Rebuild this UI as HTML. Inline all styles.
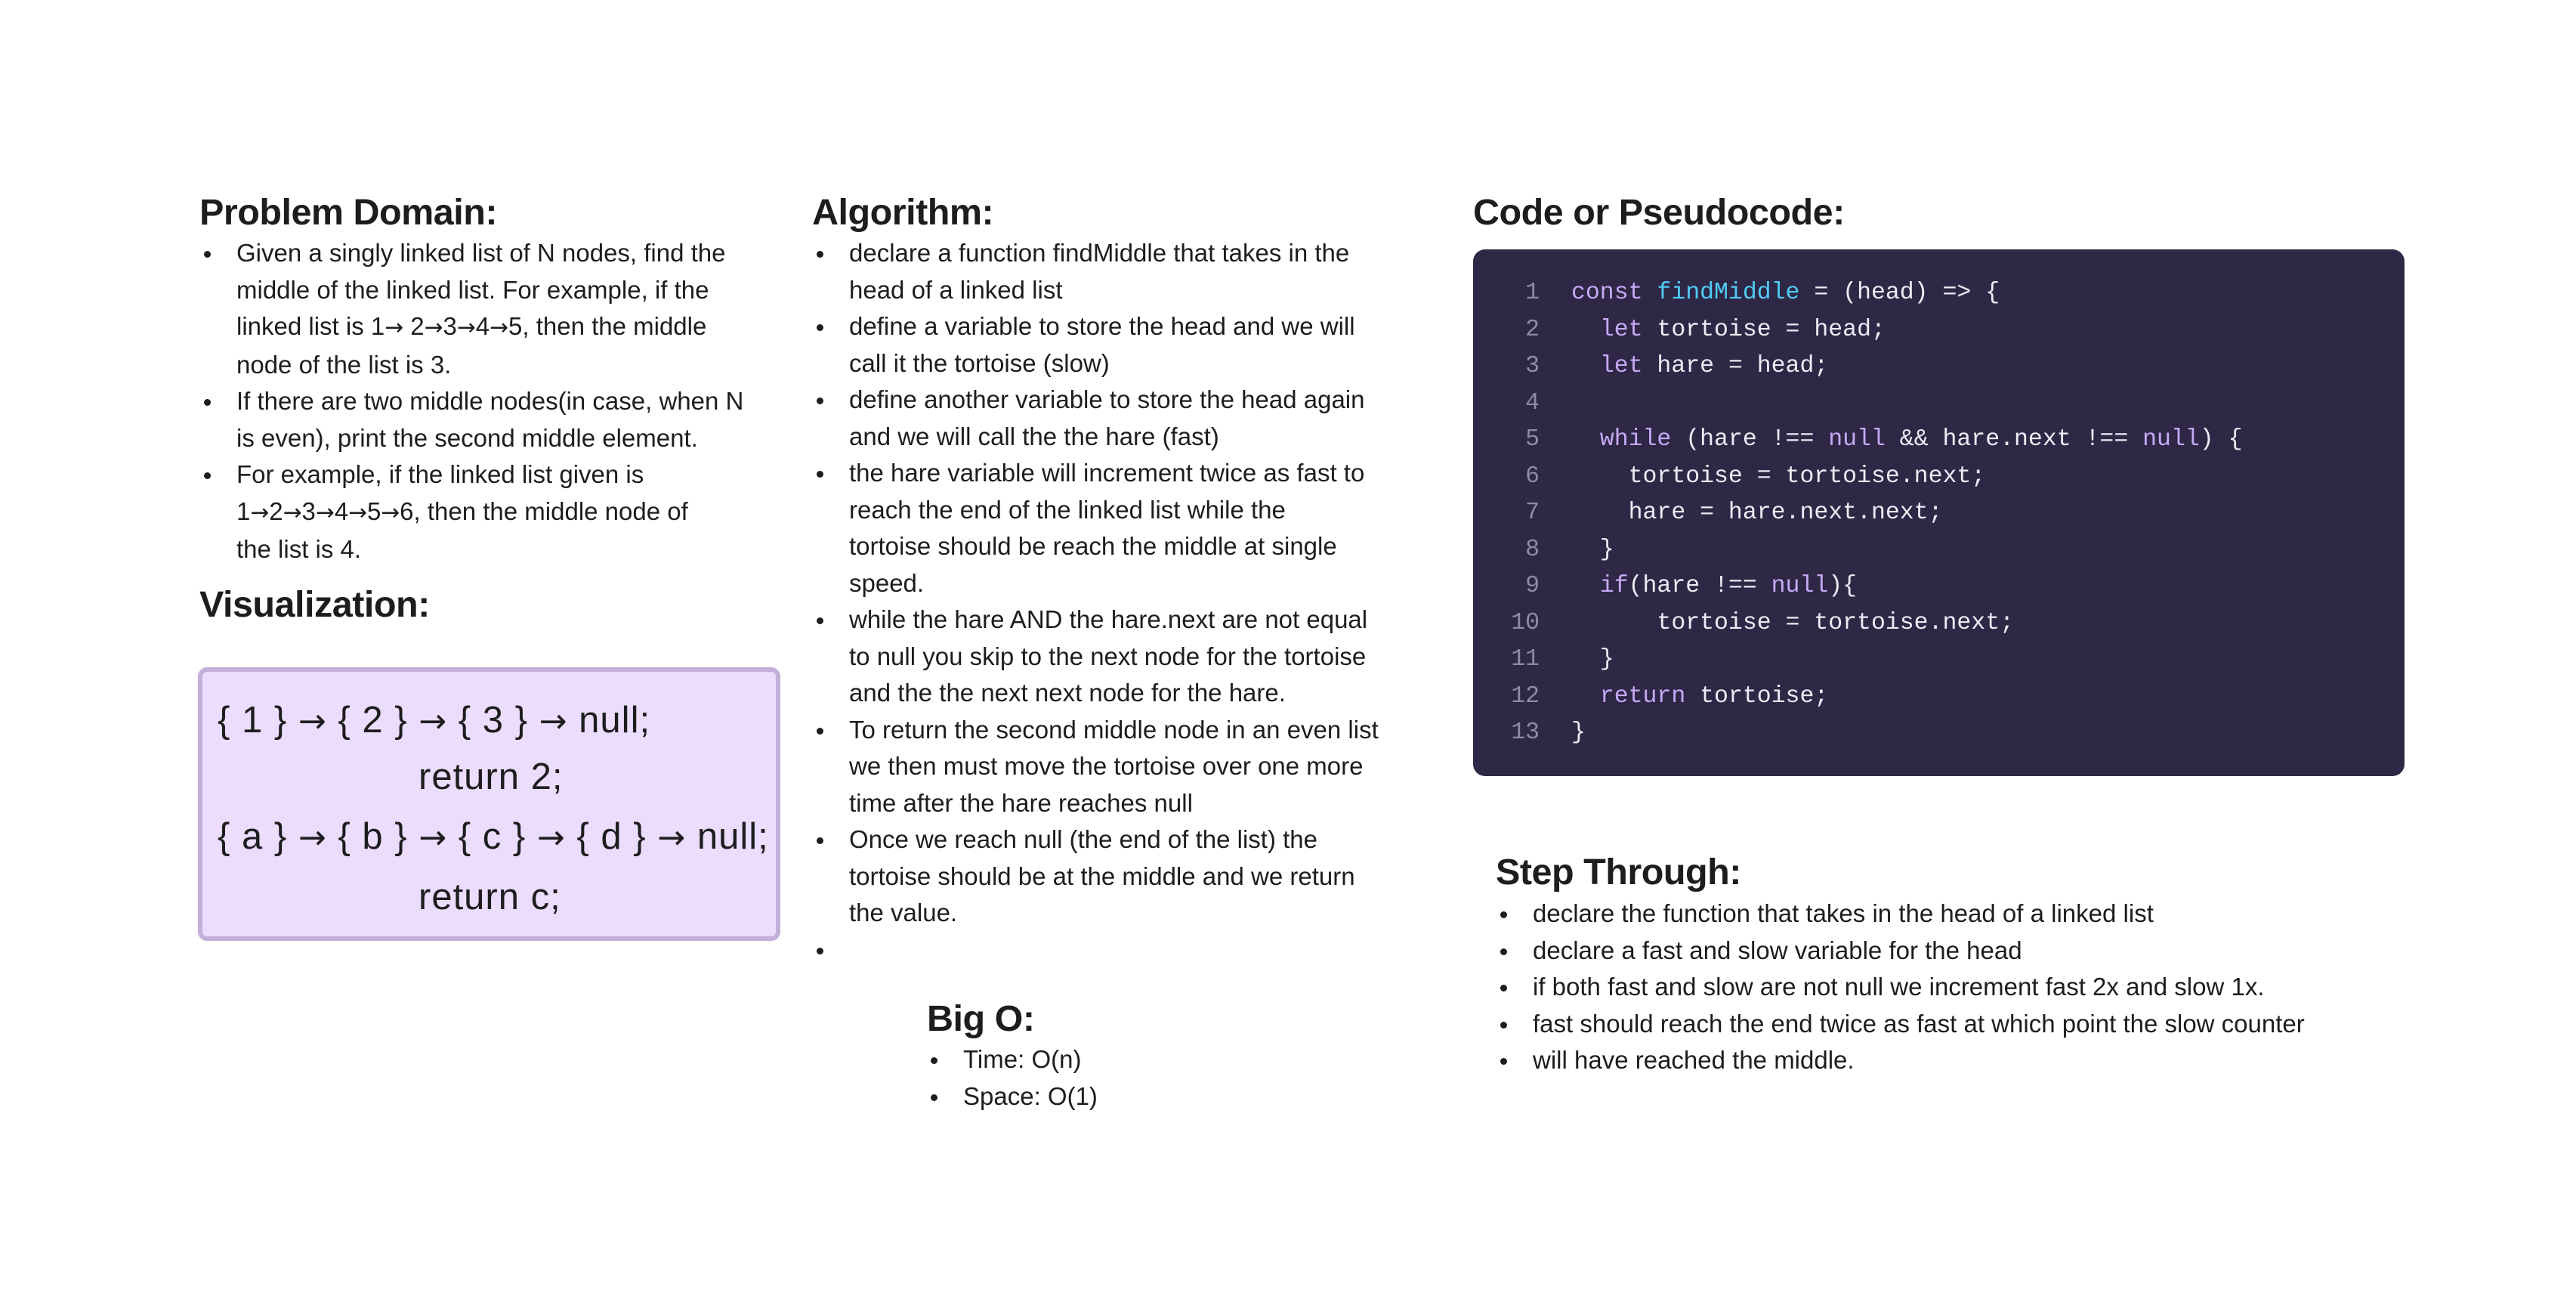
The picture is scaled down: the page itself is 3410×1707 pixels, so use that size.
<!DOCTYPE html>
<html><head><meta charset="utf-8"><style>
*{margin:0;padding:0;box-sizing:border-box}
body{width:3410px;height:1707px;background:#fff;position:relative;overflow:hidden;font-family:"Liberation Sans",sans-serif;color:#1d1d1f}
h2{position:absolute;font-size:48.5px;font-weight:bold;line-height:60px;letter-spacing:-0.5px;white-space:nowrap}
.l{position:absolute;font-size:33px;line-height:48.5px;white-space:nowrap}
.l div{position:relative}
.l .b::before{content:"";position:absolute;left:-43px;top:21px;width:9px;height:9px;border-radius:50%;background:#1d1d1f}
.a{font-family:"DejaVu Sans",sans-serif;font-size:0.9em}
.viz{position:absolute;left:262px;top:883px;width:771px;height:362px;background:#ecdcfd;border:6px solid #c3afd8;border-radius:12px;font-size:49px;line-height:78px;color:#1d1d1f;letter-spacing:1px}
.viz div{position:absolute;white-space:nowrap}
.code{position:absolute;left:1950px;top:330px;width:1233px;height:697px;background:#2e2746;border-radius:16px;font-family:"Liberation Mono",monospace;font-size:31.5px;color:#ecebf3}
.code .ln{position:absolute;left:0;width:88px;text-align:right;color:#8f8aa5;top:34px;line-height:48.5px}
.code .c{position:absolute;left:130px;white-space:pre}
.k{color:#c7a9f5}.f{color:#4fcdf5}
</style></head><body>

<h2 style="left:264px;top:251px">Problem Domain:</h2>
<div class="l" style="left:313px;top:311px">
<div class="b">Given a singly linked list of N nodes, find the</div>
<div>middle of the linked list. For example, if the</div>
<div>linked list is 1<span class="a">→</span> 2<span class="a">→</span>3<span class="a">→</span>4<span class="a">→</span>5, then the middle</div>
<div>node of the list is 3.</div>
<div class="b">If there are two middle nodes(in case, when N</div>
<div>is even), print the second middle element.</div>
<div class="b">For example, if the linked list given is</div>
<div>1<span class="a">→</span>2<span class="a">→</span>3<span class="a">→</span>4<span class="a">→</span>5<span class="a">→</span>6, then the middle node of</div>
<div>the list is 4.</div>
</div>

<h2 style="left:264px;top:770px">Visualization:</h2>
<div class="viz">
<div style="left:20px;top:25px">{ 1 } <span class="a">→</span> { 2 } <span class="a">→</span> { 3 } <span class="a">→</span> null;</div>
<div style="left:286px;top:100px">return 2;</div>
<div style="left:20px;top:179px">{ a } <span class="a">→</span> { b } <span class="a">→</span> { c } <span class="a">→</span> { d } <span class="a">→</span> null;</div>
<div style="left:286px;top:259px">return c;</div>
</div>

<h2 style="left:1075px;top:251px">Algorithm:</h2>
<div class="l" style="left:1124px;top:311px">
<div class="b">declare a function findMiddle that takes in the</div>
<div>head of a linked list</div>
<div class="b">define a variable to store the head and we will</div>
<div>call it the tortoise (slow)</div>
<div class="b">define another variable to store the head again</div>
<div>and we will call the the hare (fast)</div>
<div class="b">the hare variable will increment twice as fast to</div>
<div>reach the end of the linked list while the</div>
<div>tortoise should be reach the middle at single</div>
<div>speed.</div>
<div class="b">while the hare AND the hare.next are not equal</div>
<div>to null you skip to the next node for the tortoise</div>
<div>and the the next next node for the hare.</div>
<div class="b">To return the second middle node in an even list</div>
<div>we then must move the tortoise over one more</div>
<div>time after the hare reaches null</div>
<div class="b">Once we reach null (the end of the list) the</div>
<div>tortoise should be at the middle and we return</div>
<div>the value.</div>
<div class="b">&nbsp;</div>
</div>

<h2 style="left:1227px;top:1318px">Big O:</h2>
<div class="l" style="left:1275px;top:1378px">
<div class="b">Time: O(n)</div>
<div class="b">Space: O(1)</div>
</div>

<h2 style="left:1950px;top:251px">Code or Pseudocode:</h2>
<div class="code">
<div class="ln">1<br>2<br>3<br>4<br>5<br>6<br>7<br>8<br>9<br>10<br>11<br>12<br>13</div>
<div class="c" style="top:34px;line-height:48.5px"><span class="k">const</span> <span class="f">findMiddle</span> = (head) =&gt; {
  <span class="k">let</span> tortoise = head;
  <span class="k">let</span> hare = head;

  <span class="k">while</span> (hare !== <span class="k">null</span> &amp;&amp; hare.next !== <span class="k">null</span>) {
    tortoise = tortoise.next;
    hare = hare.next.next;
  }
  <span class="k">if</span>(hare !== <span class="k">null</span>){
      tortoise = tortoise.next;
  }
  <span class="k">return</span> tortoise;
}</div>
</div>

<h2 style="left:1980px;top:1124px">Step Through:</h2>
<div class="l" style="left:2029px;top:1185px">
<div class="b">declare the function that takes in the head of a linked list</div>
<div class="b">declare a fast and slow variable for the head</div>
<div class="b">if both fast and slow are not null we increment fast 2x and slow 1x.</div>
<div class="b">fast should reach the end twice as fast at which point the slow counter</div>
<div class="b">will have reached the middle.</div>
</div>

</body></html>
